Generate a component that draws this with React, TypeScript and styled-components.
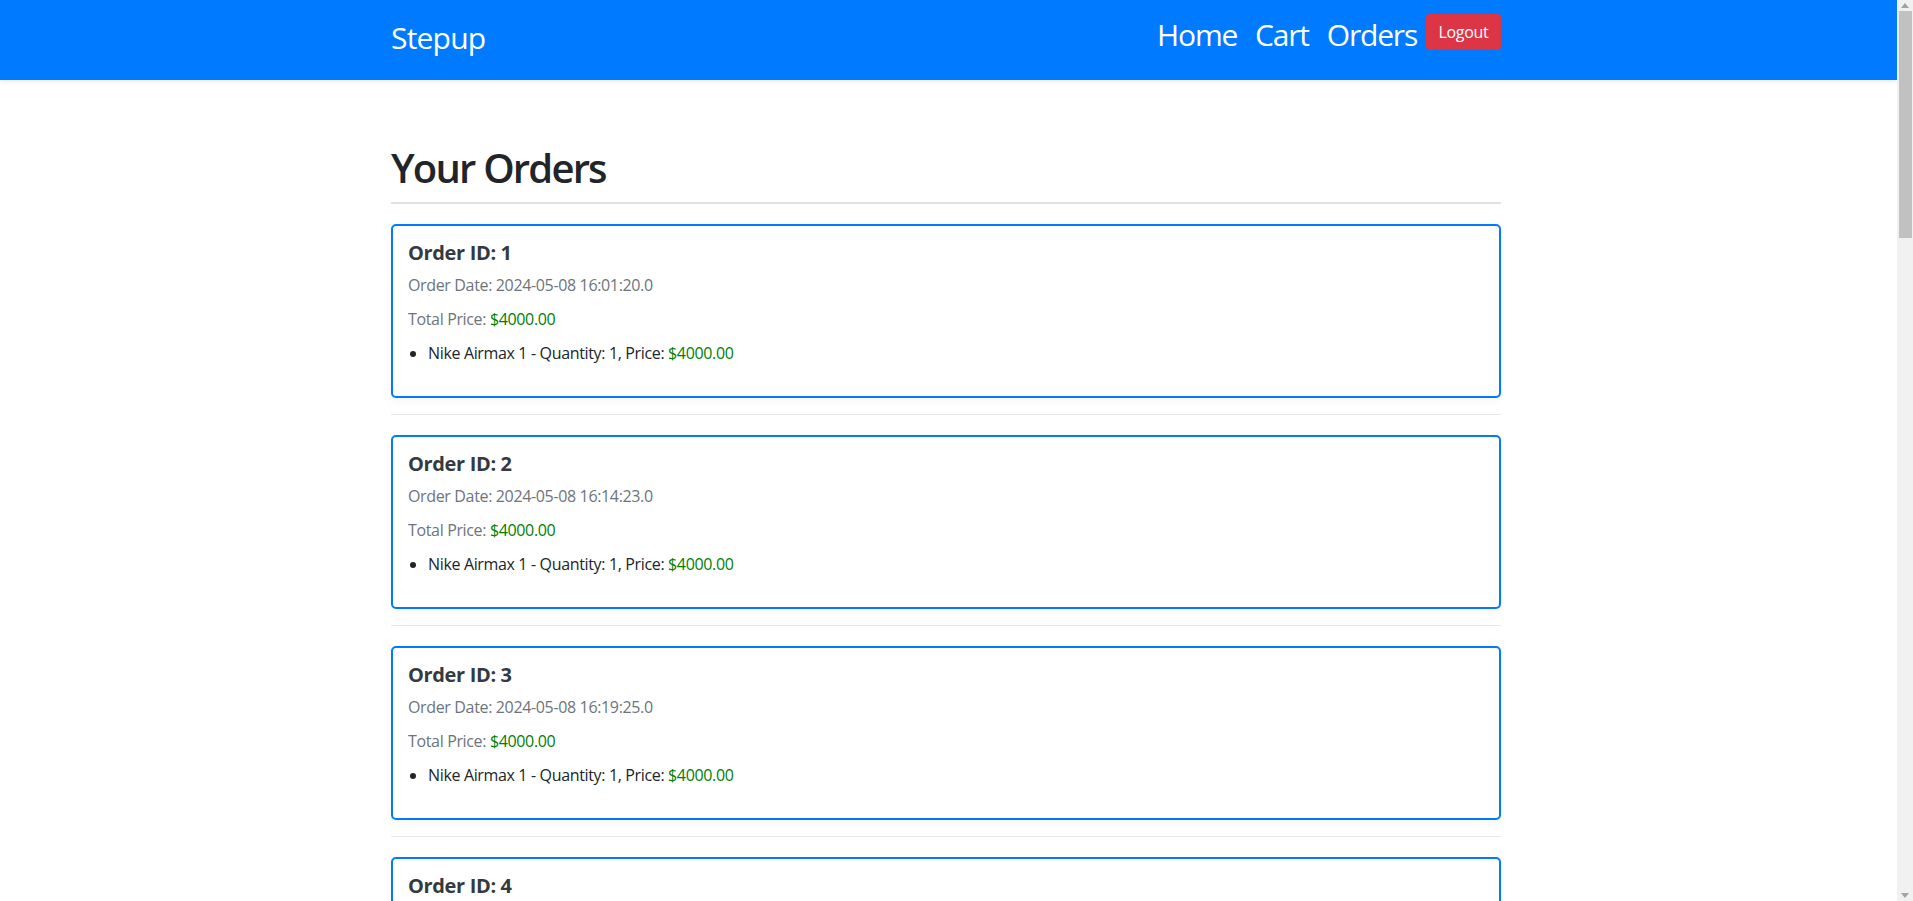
import React from "react";
import styled, { createGlobalStyle } from "styled-components";

const GlobalStyle = createGlobalStyle`
  html, body {
    margin: 0;
    padding: 0;
    background: #ffffff;
  }
  body {
    padding-right: 16px;
    font-family: "Open Sans", "Noto Sans", Arial, sans-serif;
    font-size: 16px;
    line-height: 1.5;
    color: #212529;
    letter-spacing: -0.35px;
  }
  * { box-sizing: border-box; }
`;

const ScrollTrack = styled.div`
  position: fixed;
  top: 0;
  right: 0;
  width: 16px;
  height: 100vh;
  background: #f1f1f1;
  display: flex;
  flex-direction: column;
  align-items: center;
`;

const ScrollArrow = styled.div`
  height: 11px;
  width: 100%;
  display: flex;
  align-items: center;
  justify-content: center;
`;

const ScrollThumb = styled.div`
  width: 13px;
  margin-left: 1px;
  height: 227px;
  background: #c1c1c1;
`;

const ScrollRest = styled.div`
  flex: 1;
`;

const NavBar = styled.header`
  height: 80px;
  background: #007bff;
  box-shadow: 0 2px 4px rgba(0, 0, 0, 0.08);
`;

const NavInner = styled.div`
  width: 1115px;
  padding-right: 5px;
  margin: 0 auto;
  height: 100%;
  display: flex;
  align-items: flex-start;
  justify-content: space-between;
`;

const Brand = styled.a`
  margin-top: 15px;
  font-size: 30px;
  line-height: 45px;
  letter-spacing: -0.8px;
  color: #ffffff;
  text-decoration: none;
`;

const NavRight = styled.nav`
  margin-top: 12px;
  display: flex;
  align-items: flex-start;
`;

const NavLinks = styled.div`
  display: flex;
  gap: 18px;
`;

const NavLink = styled.a`
  font-size: 30px;
  line-height: 45px;
  letter-spacing: -1.2px;
  color: #ffffff;
  text-decoration: none;
`;

const LogoutButton = styled.button`
  margin-left: 9px;
  margin-top: 2px;
  height: 36px;
  width: 75px;
  padding: 0;
  border: none;
  border-radius: 4px;
  background: #dc3545;
  color: #ffffff;
  font-family: inherit;
  font-size: 16px;
  line-height: 24px;
  letter-spacing: -0.3px;
  cursor: pointer;
`;

const Main = styled.main`
  width: 1115px;
  margin: 0 auto;
  padding: 64px 5px 48px 0;
`;

const PageTitle = styled.h1`
  margin: 0 0 20px;
  padding-bottom: 10px;
  border-bottom: 2px solid #dee2e6;
  font-size: 40px;
  line-height: 48px;
  font-weight: 600;
  letter-spacing: -1.8px;
  color: #212529;
`;

const OrderCard = styled.section`
  border: 2px solid #007bff;
  border-radius: 5px;
  padding: 15px;
  background: #ffffff;
  box-shadow: 0 2px 8px rgba(0, 0, 0, 0.05);
`;

const OrderTitle = styled.h5`
  margin: 0 0 8px;
  font-size: 20px;
  line-height: 24px;
  font-weight: 700;
  letter-spacing: -0.35px;
  color: #343a40;
`;

const Meta = styled.p`
  margin: 0 0 10px;
  color: #6c757d;
`;

const Price = styled.span`
  color: #008000;
`;

const ItemList = styled.ul`
  margin: 0 0 16px;
  padding-left: 20px;
`;

const Item = styled.li`
  color: #212529;
`;

const Divider = styled.hr`
  margin: 16px 0 20px;
  border: 0;
  border-top: 1px solid #e6e6e6;
`;

type Order = {
  id: number;
  date: string;
  total: string;
  items: { name: string; qty: number; price: string }[];
};

const dates = [
  "2024-05-08 16:01:20.0",
  "2024-05-08 16:14:23.0",
  "2024-05-08 16:19:25.0",
  "2024-05-08 16:25:41.0",
];

const orders: Order[] = dates.map((date, i) => ({
  id: i + 1,
  date,
  total: "$4000.00",
  items: [{ name: "Nike Airmax 1", qty: 1, price: "$4000.00" }],
}));

function Scrollbar() {
  return (
    <ScrollTrack aria-hidden="true">
      <ScrollArrow>
        <svg width="8" height="5" viewBox="0 0 8 5">
          <polygon points="4,0 8,5 0,5" fill="#a3a3a3" />
        </svg>
      </ScrollArrow>
      <ScrollThumb />
      <ScrollRest />
      <ScrollArrow>
        <svg width="8" height="5" viewBox="0 0 8 5">
          <polygon points="0,0 8,0 4,5" fill="#a3a3a3" />
        </svg>
      </ScrollArrow>
    </ScrollTrack>
  );
}

export default function App() {
  return (
    <>
      <GlobalStyle />
      <NavBar>
        <NavInner>
          <Brand href="#">Stepup</Brand>
          <NavRight>
            <NavLinks>
              <NavLink href="#">Home</NavLink>
              <NavLink href="#">Cart</NavLink>
              <NavLink href="#">Orders</NavLink>
            </NavLinks>
            <LogoutButton type="button">Logout</LogoutButton>
          </NavRight>
        </NavInner>
      </NavBar>
      <Main>
        <PageTitle>Your Orders</PageTitle>
        {orders.map((o) => (
          <React.Fragment key={o.id}>
            <OrderCard>
              <OrderTitle>Order ID: {o.id}</OrderTitle>
              <Meta>Order Date: {o.date}</Meta>
              <Meta>
                Total Price: <Price>{o.total}</Price>
              </Meta>
              <ItemList>
                {o.items.map((it, i) => (
                  <Item key={i}>
                    {it.name} - Quantity: {it.qty}, Price: <Price>{it.price}</Price>
                  </Item>
                ))}
              </ItemList>
            </OrderCard>
            <Divider />
          </React.Fragment>
        ))}
      </Main>
      <Scrollbar />
    </>
  );
}
